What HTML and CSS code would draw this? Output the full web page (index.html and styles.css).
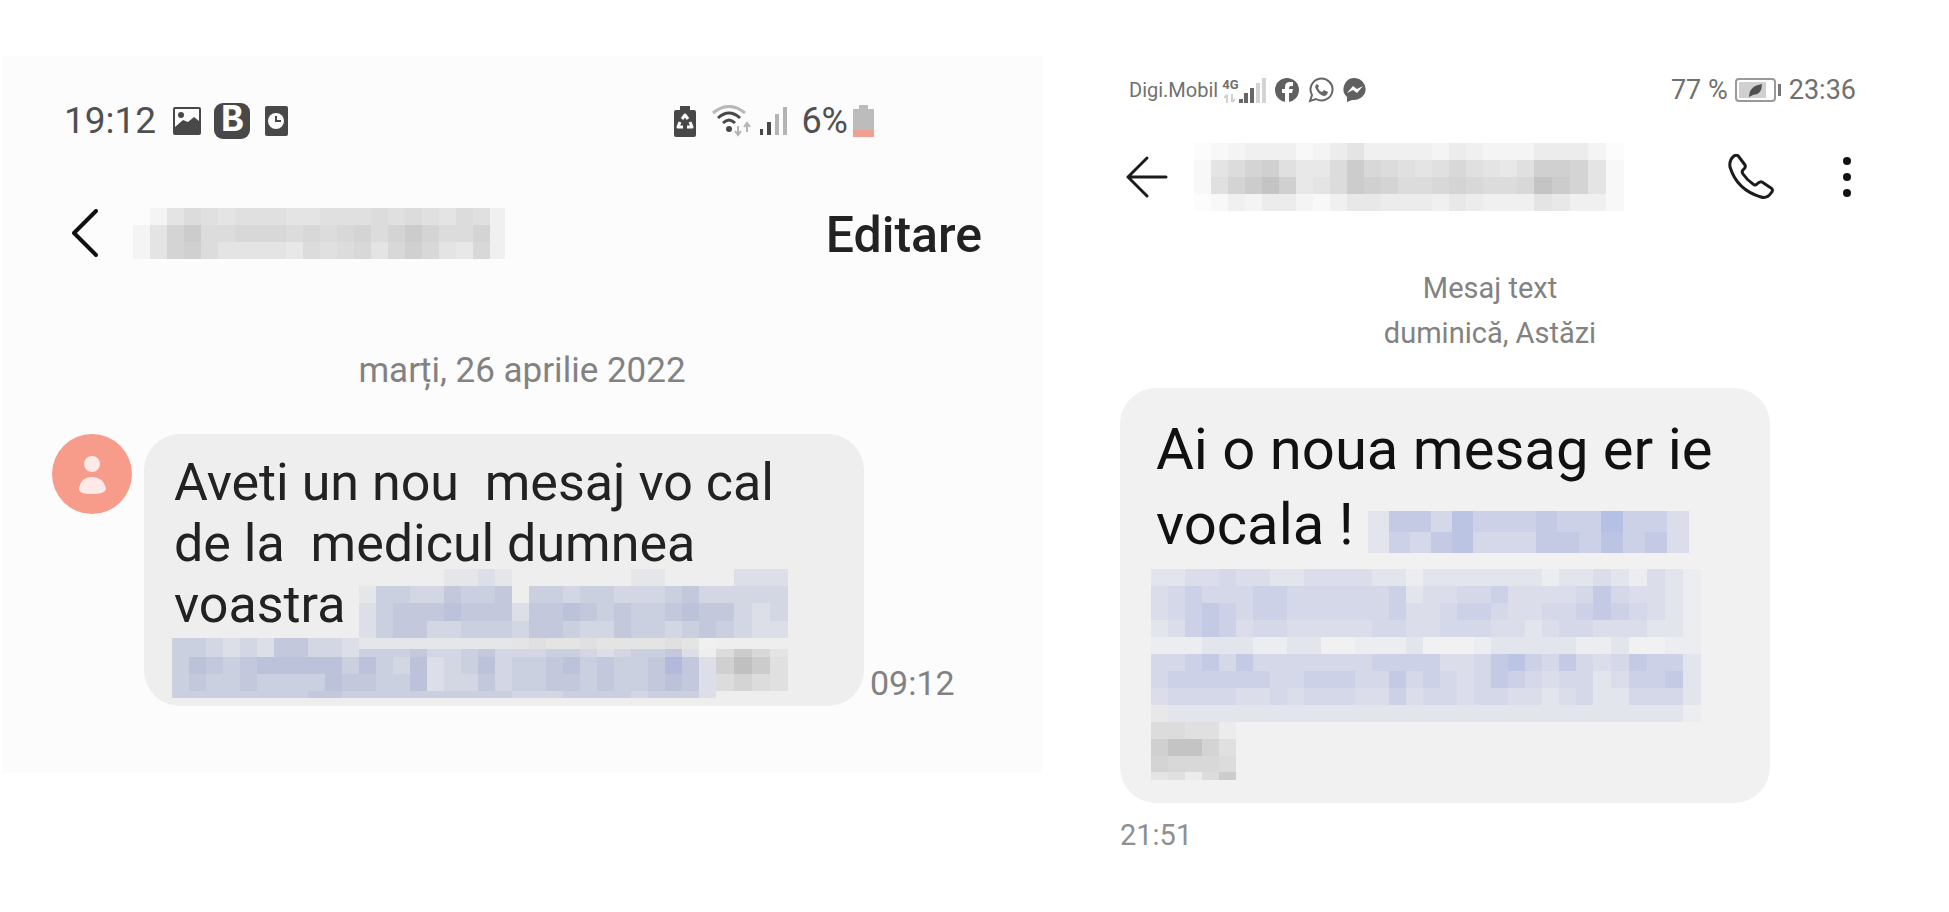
FILE: index.html
```html
<!DOCTYPE html>
<html lang="ro">
<head>
  <meta charset="UTF-8">
  <meta name="viewport" content="width=device-width, initial-scale=1.0">
  <title>Mesaje</title>
  <link rel="stylesheet" href="styles.css">
</head>
<body>
  <main class="compare">
    <section class="phone phone-left">
      <div class="status">
        <div class="status-group">
          <span class="clock">19:12</span>
          <svg class="icon-image" width="30" height="30" viewBox="0 0 30 30">
            <rect x="1" y="1" width="28" height="28" rx="2" fill="#484848"/>
            <path d="M3 3h24v12l-5-4-6 5-5-2-8 7z" fill="#fcfcfc"/>
            <circle cx="9" cy="9" r="3" fill="#484848"/>
          </svg>
          <span class="badge-b">B</span>
          <svg class="icon-alarm" width="25" height="30" viewBox="0 0 25 30">
            <rect x="1" y="0" width="23" height="30" rx="2" fill="#484848"/>
            <circle cx="12" cy="15" r="8" fill="#fcfcfc"/>
            <path d="M12 10v5h5" fill="none" stroke="#484848" stroke-width="2"/>
          </svg>
        </div>
        <div class="status-group">
          <svg width="22" height="32" viewBox="0 0 22 32">
            <path d="M6 1h10v4h4q2 0 2 2v23q0 2-2 2H2q-2 0-2-2V7q0-2 2-2h4z" fill="#484848"/>
            <path d="M8 14l3-4 3 4M6 17l-2 5h5M16 17l2 5h-5" fill="none" stroke="#fcfcfc" stroke-width="3" stroke-linejoin="round"/>
          </svg>
          <svg class="icon-wifi" width="40" height="32" viewBox="0 0 40 32" fill="none">
            <path d="M1 8Q17-5 33 8" stroke="#b8b8b8" stroke-width="3"/>
            <path d="M6 13Q17 3 28 13M11 18Q17 12 23 18" stroke="#484848" stroke-width="3"/>
            <circle cx="17" cy="24" r="3" fill="#484848"/>
            <path d="M26 21v8M23 26l3 4 3-4M35 27v-8M32 22l3-4 3 4" stroke="#b4b4b4" stroke-width="2"/>
          </svg>
          <svg width="28" height="28" viewBox="0 0 28 28">
            <path d="M1 22h3v6H1zM8 15h4v13H8z" fill="#484848"/>
            <path d="M16 7h4v21h-4zM24 0h4v28h-4z" fill="#b4b4b4"/>
          </svg>
          <span class="percent">6%</span>
          <svg width="21" height="32" viewBox="0 0 21 32">
            <path d="M6 0h9v4h6v21H0V4h6z" fill="#bcbcbc"/>
            <path d="M0 25h21v7H0z" fill="#f0a090"/>
          </svg>
        </div>
      </div>

      <header class="bar">
        <button class="icon-button" aria-label="Înapoi">
          <svg width="26" height="48" viewBox="0 0 26 48" fill="none" stroke="#111" stroke-width="4" stroke-linecap="round" stroke-linejoin="round">
            <path d="M24 2L2 24l22 22"/>
          </svg>
        </button>
        <svg class="mosaic" data-mosaic="leftName"></svg>
        <button class="edit">Editare</button>
      </header>

      <p class="date">marți, 26 aprilie 2022</p>

      <div class="message">
        <svg class="avatar" width="81" height="81" viewBox="0 0 81 81">
          <circle cx="40" cy="40" r="40" fill="#f79b8a"/>
          <circle cx="40" cy="30" r="8" fill="#fde9e6"/>
          <path d="M27 54q2-11 13-11t14 11q0 6-14 6t-13-6z" fill="#fde9e6"/>
        </svg>
        <div class="bubble">
          <p>Aveti un nou&nbsp; mesaj vo cal<br>de la&nbsp; medicul dumnea<br>voastra<br>&nbsp;</p>
          <svg class="mosaic" data-mosaic="leftLink"></svg>
        </div>
        <time>09:12</time>
      </div>
    </section>

    <section class="phone phone-right">
      <div class="status">
        <div class="status-group">
          <span class="carrier">Digi.Mobil</span>
          <span class="network">
            <span class="network-type">4G</span>
            <svg width="12" height="9" viewBox="0 0 12 9" fill="none" stroke="#d0d0d0" stroke-width="2">
              <path d="M3 9V1M0 4l3-3M8 0v8M11 5L8 8"/>
            </svg>
          </span>
          <svg width="27" height="25" viewBox="0 0 27 25">
            <path d="M0 21h4v4H0zM5 15h4v10H5zM11 10h4v15h-4z" fill="#666"/>
            <path d="M17 5h4v20h-4zM23 0h4v25h-4z" fill="#d4d4d4"/>
          </svg>
          <svg class="icon-app" width="24" height="24" viewBox="0 0 24 24">
            <circle cx="12" cy="12" r="12" fill="#606060"/>
            <path d="M10 24v-9H7v-4h3V9q0-5 5-5h3v4h-2q-2 0-2 2v1h4l-1 4h-3v9z" fill="#fff"/>
          </svg>
          <svg class="icon-app" width="26" height="26" viewBox="0 0 26 26">
            <path d="M2 24l2-6a11 11 0 1 1 4 4z" fill="none" stroke="#666" stroke-width="2"/>
            <path d="M9 7q-3 2-1 5 3 6 8 7 3 0 4-4l-4-2-2 2q-3-1-4-4l1-2z" fill="#666"/>
          </svg>
          <svg class="icon-app" width="24" height="24" viewBox="0 0 24 24">
            <path d="M12 0a12 11 0 1 1-3 22l-5 2v-5A11 11 0 0 1 12 0z" fill="#606060"/>
            <path d="M4 15l6-7 4 3 6-3-6 7-4-3z" fill="#fff"/>
          </svg>
        </div>
        <div class="status-group">
          <span class="clock">77 %</span>
          <svg class="icon-battery" width="47" height="24" viewBox="0 0 47 24">
            <rect x="1" y="1" width="39" height="22" rx="3" fill="#fff" stroke="#999" stroke-width="2"/>
            <rect x="4" y="4" width="27" height="16" fill="#d0d0d0"/>
            <path d="M14 19q0-11 13-13 0 11-9 11z" fill="#505050"/>
            <path d="M43 6h3v12h-3z" fill="#777"/>
          </svg>
          <span class="clock">23:36</span>
        </div>
      </div>

      <header class="bar">
        <button class="icon-button" aria-label="Înapoi">
          <svg width="42" height="42" viewBox="0 0 42 42" fill="none" stroke="#1c1c1c" stroke-width="3" stroke-linecap="round" stroke-linejoin="round">
            <path d="M21 2L2 21l19 19M2 21h38"/>
          </svg>
        </button>
        <svg class="mosaic" data-mosaic="rightName"></svg>
        <div class="actions">
          <button class="icon-button" aria-label="Apelează">
            <svg width="46" height="46" viewBox="0 0 46 46" fill="none" stroke="#1c1c1c" stroke-width="3" stroke-linejoin="round">
              <path d="M6 2q3-2 5 1l6 8q1 2-1 4-3 2-1 5 4 6 10 10 2 2 4 0 3-3 5-2l9 6q3 2 0 5-4 6-10 4Q9 36 2 13 1 6 6 2z"/>
            </svg>
          </button>
          <button class="icon-button" aria-label="Mai multe">
            <svg width="10" height="42" viewBox="0 0 10 42" fill="#111">
              <circle cx="5" cy="5" r="4"/>
              <circle cx="5" cy="21" r="4"/>
              <circle cx="5" cy="37" r="4"/>
            </svg>
          </button>
        </div>
      </header>

      <p class="date">Mesaj text<br>duminică, Astăzi</p>

      <div class="message">
        <div class="bubble">
          <p>Ai o noua mesag er ie<br>vocala ! <svg class="mosaic" data-mosaic="rightInline"></svg></p>
          <svg class="mosaic" data-mosaic="rightLink"></svg>
        </div>
        <time>21:51</time>
      </div>
    </section>
  </main>

  <script src="mosaic.js"></script>
</body>
</html>
```

FILE: styles.css
```css
* {
  box-sizing: border-box;
}
body {
  font-family: Roboto, 'Liberation Sans', sans-serif;
  margin: 0;
  background-color: #fff;
  color: #222;
}
p {
  margin: 0;
}
svg {
  display: block;
  flex: none;
}
.compare {
  display: grid;
  grid-template-columns: 1042fr 907fr;
  align-items: start;
}
.status,
.status-group,
.bar,
.actions {
  display: flex;
  align-items: center;
}
.status {
  justify-content: space-between;
}
.icon-button,
.edit {
  background: none;
  border: none;
  padding: 0;
  font: inherit;
  color: inherit;
  cursor: pointer;
}
.date {
  text-align: center;
  color: #828282;
}
time {
  color: #828282;
  line-height: 40px;
}
.bubble p {
  white-space: nowrap;
}

/* left phone */
.phone-left {
  margin: 56px 0 0 2px;
  padding-bottom: 67px;
  background-color: #fcfcfc;
}
.phone-left .status {
  padding: 46px 168px 0 62px;
  height: 84px;
  color: #505050;
  font-size: 37px;
  line-height: 38px;
}
.icon-image {
  margin-left: 16px;
}
.badge-b {
  width: 36px;
  height: 36px;
  margin: 0 14px 0 12px;
  border-radius: 9px;
  background-color: #484848;
  color: #fcfcfc;
  font-family: 'Liberation Mono', monospace;
  font-size: 38px;
  font-weight: 700;
  line-height: 36px;
  text-align: center;
}
.icon-wifi {
  margin: 0 7px 0 16px;
}
.percent {
  margin: 0 5px 0 14px;
  font-size: 36px;
}
.phone-left .bar {
  margin-top: 67px;
  padding: 0 60px 0 70px;
}
.phone-left .bar .mosaic {
  margin-left: 35px;
}
.edit {
  margin-left: auto;
  padding-top: 4px;
  font-size: 50px;
  font-weight: 500;
  line-height: 48px;
}
.phone-left .date {
  margin-top: 92px;
  font-size: 35px;
  line-height: 40px;
}
.phone-left .message {
  display: flex;
  margin-top: 43px;
  padding-left: 50px;
}
.phone-left .bubble {
  display: grid;
  margin: 0 6px 0 11px;
  padding: 18px 76px 8px 28px;
  border-radius: 36px;
  background-color: #eee;
  font-size: 52px;
  line-height: 61px;
}
.phone-left .bubble p {
  padding: 0 0 2px 2px;
}
/* the redaction covers the last two lines of the text */
.phone-left .bubble p,
.phone-left .bubble .mosaic {
  grid-area: 1 / 1;
}
.phone-left .bubble .mosaic {
  align-self: end;
}
.phone-left time {
  align-self: flex-end;
  padding-bottom: 3px;
  font-size: 34px;
}

/* right phone */
.phone-right .status {
  padding: 77px 93px 0 87px;
  height: 103px;
  color: #707070;
}
.phone-right .clock {
  font-size: 27px;
}
.carrier {
  font-size: 20px;
}
.network {
  display: flex;
  flex-direction: column;
  align-items: center;
  gap: 3px;
  margin-left: 4px;
}
.network-type {
  font-size: 13px;
  font-weight: 700;
  line-height: 13px;
}
.icon-app {
  margin-left: 9px;
}
.icon-battery {
  margin: 0 7px;
}
.phone-right .bar {
  margin-top: 40px;
  padding: 0 97px 0 84px;
}
.phone-right .bar .mosaic {
  margin-left: 26px;
}
.actions {
  gap: 68px;
  margin-left: auto;
}
.phone-right .date {
  margin-top: 55px;
  padding-right: 11px;
  font-size: 29px;
  line-height: 45px;
}
.phone-right .message {
  display: flex;
  flex-direction: column;
  align-items: flex-start;
  gap: 12px;
  margin-top: 32px;
  padding-left: 78px;
}
.phone-right .bubble {
  padding: 24px 57px 23px 31px;
  border-radius: 36px;
  background-color: #f1f1f1;
  color: #111;
  font-size: 58px;
  line-height: 75px;
}
.phone-right .bubble p {
  height: 157px;
  padding-left: 5px;
}
.phone-right .bubble p .mosaic {
  display: inline-block;
  vertical-align: -9px;
}
.phone-right time {
  color: #909090;
  font-size: 29px;
}
```

FILE: mosaic.js
```js
// Pixelated redactions. Each letter is a colour, "." is left empty.
const colors = {
  A: '#eeeeef', B: '#e5e6ea', C: '#dcdfe8', D: '#d3d6e3',
  E: '#cbd0e0', F: '#c3c8dc', G: '#bcc2da', H: '#b3b9da',
  R: '#ecedf0', S: '#e3e5ec', T: '#dbdeea', U: '#d4d8e8',
  V: '#ccd1e7', W: '#c4c9e4', X: '#bcc4e3', Y: '#b6bfe4'
};

// a..p are greys, from light to dark
'abcdefghijklmnop'.split('').forEach((letter, i) => {
  const level = 252 - i * 4;
  colors[letter] = `rgb(${level}, ${level}, ${level})`;
});

// cols: [count, width] runs, rows: [height, cells]
const mosaics = {
  leftName: {
    cols: [[21, 17], [1, 15]],
    rows: [
      [17, 'acgihghhhgghhhihihgihd'],
      [17, 'cgkmiijjjijijkikmkiikd'],
      [17, 'cgkliggggfihijgjljgfjd']
    ]
  },
  leftLink: {
    cols: [[32, 17], [4, 18]],
    rows: [
      [17, '................BBCB.......BBAA..CCC'],
      [17, '...........BEEDDFEEFAEEDEEDDDEFDDDDD'],
      [18, '...........CEFFFGFFFCFFGFEFEEFGFFDCD'],
      [17, '...........CEFFDDEEEDFFEDDFEEDEFEDCC'],
      [11, 'EEDCDCFFDDCBBBBBBBBBghgghgggghgd....'],
      [8, 'EEDCDCFFDDCEEEFDDEFDDDEEDCDEEFCAimjg'],
      [17, 'EGFEFGGGGGEGEDGCDEGDEEFGEFEEFHFClpmh'],
      [17, 'EFEEFEEEEGFFEEGCDDFDEEFFEFEEFGFCikih'],
      [7, 'EEEEEEEEFFEEEEEEEEEEDDDEEEEDEEEC....']
    ]
  },
  rightName: {
    cols: [[20, 17], [5, 18]],
    rows: [
      [17, 'abcdddbcegddddcedccceeeca'],
      [17, 'bgiklhffimjihghjhgfhllkgb'],
      [17, 'bhkmolfgimlkiijkjiijomkgb'],
      [17, 'abdceecbdffeeedfedddgfddb']
    ]
  },
  rightInline: {
    cols: [[9, 21], [6, 22]],
    rows: [
      [21, 'SWWUXVVVWVVYVVT'],
      [21, 'SVUWXUUUWWVXVWT']
    ]
  },
  rightLink: {
    cols: [[26, 17], [6, 18]],
    rows: [
      [17, 'SSTTUTTSSTTTTSSRSSSSSSSRSSTSRTSR'],
      [17, 'TUVUUUVVUUUUUUVSTTUUVTTTTUWUTTSR'],
      [17, 'TUVWVUVVUUUUUUVTTUVVUTTUUVWVUTSR'],
      [17, 'STVWVTUUTTTTTUUTTUUUTTSTUUTTTSSR'],
      [17, 'RRRSSSRRSS..RRRS...RSSSSSRRS..RR'],
      [17, 'UUVWUWUUUUUUUVVVVTTUWXVUWUTUWVVS'],
      [17, 'UVVVVVVUUVVVUUWUVUTUWVUTUUSTVVWS'],
      [17, 'TUUUUTTUTUUUTTVTUUTUUTTSTUSSUUUS'],
      [17, 'fSSSSSSSSSSSSSSSSSSSSSSSSSSSSSSR'],
      [17, 'iihhe'],
      [17, 'lookh'],
      [16, 'kjjji'],
      [8, 'gheim']
    ]
  }
};

function drawMosaic(svg) {
  const { cols, rows } = mosaics[svg.dataset.mosaic];
  const widths = cols.flatMap(([count, width]) => Array(count).fill(width));
  let rects = '';
  let y = 0;
  rows.forEach(([height, cells]) => {
    let x = 0;
    cells.split('').forEach((cell, i) => {
      if (cell !== '.') {
        rects += `<rect x="${x}" y="${y}" width="${widths[i]}" height="${height}" fill="${colors[cell]}"/>`;
      }
      x += widths[i];
    });
    y += height;
  });
  svg.setAttribute('width', widths.reduce((sum, width) => sum + width, 0));
  svg.setAttribute('height', y);
  svg.innerHTML = rects;
}

document.querySelectorAll('[data-mosaic]').forEach(drawMosaic);
```
